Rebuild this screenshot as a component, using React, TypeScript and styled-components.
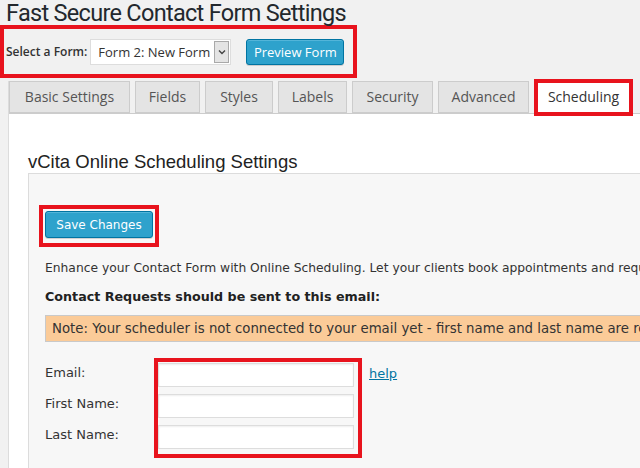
import React from 'react';
import styled, { createGlobalStyle } from 'styled-components';

const RED = '#e8131d';

const Global = createGlobalStyle`
  html, body { margin: 0; padding: 0; overflow: hidden; background: #f1f1f1; }
  body { font-family: "Open Sans", "Liberation Sans", sans-serif; color: #444; }
`;

const Page = styled.div`
  width: 640px;
  height: 468px;
  overflow: hidden;
  background: #f1f1f1;
`;

const Title = styled.h1`
  margin: 0;
  padding-left: 6px;
  height: 25px;
  line-height: 27px;
  font-family: Roboto, "Open Sans", sans-serif;
  font-size: 23.5px;
  letter-spacing: -0.7px;
  font-weight: 400;
  color: #23282d;
  white-space: nowrap;
`;

const FormBar = styled.div`
  display: flex;
  align-items: center;
  box-sizing: border-box;
  width: 357px;
  height: 53px;
  border: 4px solid ${RED};
  padding-left: 2px;
`;

const BarLabel = styled.span`
  font-size: 12px;
  font-weight: 600;
  color: #333;
  margin-right: 3px;
  white-space: nowrap;
`;

const SelectBox = styled.div`
  display: flex;
  align-items: center;
  box-sizing: border-box;
  width: 141px;
  height: 26px;
  background: #fff;
  border: 1px solid #ddd;
  padding-left: 7px;
  font-size: 13px;
  color: #333;
  white-space: nowrap;
`;

const SelectText = styled.span`
  flex: 1;
`;

const ArrowBox = styled.span`
  display: flex;
  align-items: center;
  justify-content: center;
  box-sizing: border-box;
  width: 15px;
  height: 22px;
  margin-right: 1px;
  background: #e4e4e4;
  border: 1px solid #a9a9a9;
`;

const BlueButton = styled.button<{ $font: string; $size: number }>`
  box-sizing: border-box;
  background: #2ea2cc;
  border: 1px solid #0074a2;
  border-radius: 3px;
  box-shadow: inset 0 1px 0 rgba(120, 200, 230, 0.5), 0 1px 0 rgba(0, 0, 0, 0.15);
  color: #fff;
  font-family: ${(p) => p.$font};
  font-size: ${(p) => p.$size}px;
  padding: 0;
  white-space: nowrap;
`;

const PreviewButton = styled(BlueButton)`
  width: 98px;
  height: 26px;
  margin-left: 15px;
`;

const Content = styled.div`
  margin-left: 8px;
  margin-top: 3px;
  border-left: 1px solid #dcdcdc;
  height: 400px;
  display: flex;
  flex-direction: column;
`;

const TabBar = styled.div`
  display: flex;
  gap: 5px;
  height: 32px;
  align-items: flex-start;
  position: relative;
  z-index: 1;
`;

const Tab = styled.div<{ $active?: boolean; $w: number }>`
  box-sizing: border-box;
  width: ${(p) => p.$w}px;
  height: ${(p) => (p.$active ? 33 : 32)}px;
  margin-left: ${(p) => (p.$active ? 2 : 0)}px;
  border: 1px solid #ccc;
  border-bottom: ${(p) => (p.$active ? 'none' : '1px solid #ccc')};
  background: ${(p) => (p.$active ? '#fff' : '#e4e4e4')};
  color: ${(p) => (p.$active ? '#333' : '#555')};
  font-size: 14px;
  line-height: 30px;
  text-align: center;
  white-space: nowrap;
  outline: ${(p) => (p.$active ? `4px solid ${RED}` : 'none')};
  outline-offset: -2px;
`;

const Panel = styled.div`
  flex: 1;
  background: #fff;
  border-top: 1px solid #ccc;
  padding-left: 19px;
`;

const Heading = styled.h2`
  margin: 37px 0 0;
  font-family: "Liberation Sans", Arial, sans-serif;
  font-size: 18.5px;
  line-height: 22px;
  font-weight: 400;
  color: #222;
  white-space: nowrap;
`;

const InnerBox = styled.div`
  width: 720px;
  height: 320px;
  background: #f7f7f7;
  border-top: 1px solid #dcdcdc;
  border-left: 1px solid #dcdcdc;
  padding: 31px 0 0 16px;
  box-sizing: border-box;
`;

const SaveFrame = styled.div`
  display: inline-block;
  margin-left: -6px;
  border: 4px solid ${RED};
  padding: 2px 2px 5px 2px;
`;

const SaveButton = styled(BlueButton)`
  display: block;
  width: 108px;
  height: 27px;
`;

const Intro = styled.p`
  margin: 13px 0 0;
  font-family: "DejaVu Sans", Verdana, sans-serif;
  font-size: 12.3px;
  line-height: 16px;
  color: #333;
  white-space: nowrap;
`;

const SubHead = styled.p`
  margin: 13px 0 0;
  font-family: "DejaVu Sans", Verdana, sans-serif;
  font-size: 12.7px;
  font-weight: 700;
  line-height: 16px;
  color: #222;
  white-space: nowrap;
`;

const Note = styled.div`
  margin-top: 10px;
  box-sizing: border-box;
  height: 27px;
  background: #fbcb98;
  border: 1px solid #c9c9c9;
  padding-left: 6px;
  font-family: "DejaVu Sans", Verdana, sans-serif;
  font-size: 13.3px;
  line-height: 25px;
  color: #333;
  white-space: nowrap;
`;

const FormArea = styled.div`
  display: flex;
  align-items: flex-start;
  margin-top: 16px;
`;

const LabelCol = styled.div`
  width: 109px;
  padding-top: 3px;
  display: flex;
  flex-direction: column;
`;

const FieldLabel = styled.label`
  height: 31px;
  line-height: 24px;
  font-family: "DejaVu Sans", Verdana, sans-serif;
  font-size: 13px;
  color: #333;
  white-space: nowrap;
`;

const InputGroup = styled.div`
  display: flex;
  flex-direction: column;
  gap: 7px;
  border: 4px solid ${RED};
  padding: 1px 4px 5px 0;
`;

const TextInput = styled.input`
  box-sizing: border-box;
  width: 196px;
  height: 24px;
  margin: 0;
  border: 1px solid #ddd;
  background: #fff;
  box-shadow: inset 0 1px 2px rgba(0, 0, 0, 0.07);
  outline: none;
`;

const HelpLink = styled.a`
  margin: 4px 0 0 7px;
  line-height: 24px;
  font-family: "DejaVu Sans", Verdana, sans-serif;
  font-size: 13px;
  color: #0074a2;
  text-decoration: underline;
`;

const tabs: [string, number][] = [
  ['Basic Settings', 121],
  ['Fields', 65],
  ['Styles', 68],
  ['Labels', 69],
  ['Security', 81],
  ['Advanced', 91],
];

export default function App() {
  return (
    <Page>
      <Global />
      <Title>Fast Secure Contact Form Settings</Title>
      <FormBar>
        <BarLabel>Select a Form:</BarLabel>
        <SelectBox>
          <SelectText>Form 2: New Form</SelectText>
          <ArrowBox>
            <svg width="8" height="6" viewBox="0 0 8 6">
              <path d="M1 1.5 L4 4.5 L7 1.5" fill="none" stroke="#444" strokeWidth="1.4" />
            </svg>
          </ArrowBox>
        </SelectBox>
        <PreviewButton $font='"Open Sans", sans-serif' $size={13}>Preview Form</PreviewButton>
      </FormBar>
      <Content>
        <TabBar>
          {tabs.map(([t, w]) => (
            <Tab key={t} $w={w}>{t}</Tab>
          ))}
          <Tab $active $w={95}>Scheduling</Tab>
        </TabBar>
        <Panel>
          <Heading>vCita Online Scheduling Settings</Heading>
          <InnerBox>
            <SaveFrame>
              <SaveButton $font='"DejaVu Sans", Verdana, sans-serif' $size={12}>Save Changes</SaveButton>
            </SaveFrame>
            <Intro>
              Enhance your Contact Form with Online Scheduling. Let your clients book appointments and request meetings with you.
            </Intro>
            <SubHead>Contact Requests should be sent to this email:</SubHead>
            <Note>
              Note: Your scheduler is not connected to your email yet - first name and last name are required.
            </Note>
            <FormArea>
              <LabelCol>
                <FieldLabel>Email:</FieldLabel>
                <FieldLabel>First Name:</FieldLabel>
                <FieldLabel>Last Name:</FieldLabel>
              </LabelCol>
              <InputGroup>
                <TextInput type="text" />
                <TextInput type="text" />
                <TextInput type="text" />
              </InputGroup>
              <HelpLink href="#">help</HelpLink>
            </FormArea>
          </InnerBox>
        </Panel>
      </Content>
    </Page>
  );
}
